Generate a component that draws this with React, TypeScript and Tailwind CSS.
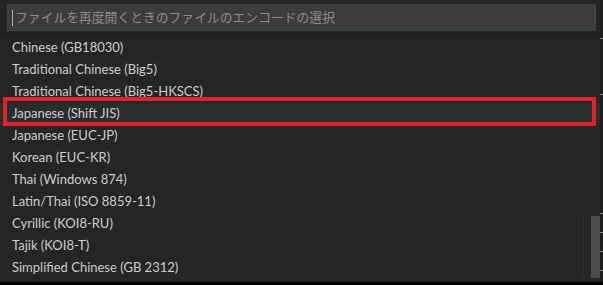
import React from "react";

const items = [
  "Chinese (GB18030)",
  "Traditional Chinese (Big5)",
  "Traditional Chinese (Big5-HKSCS)",
  "Japanese (Shift JIS)",
  "Japanese (EUC-JP)",
  "Korean (EUC-KR)",
  "Thai (Windows 874)",
  "Latin/Thai (ISO 8859-11)",
  "Cyrillic (KOI8-RU)",
  "Tajik (KOI8-T)",
  "Simplified Chinese (GB 2312)",
];

export default function App() {
  return (
    <div
      className="w-[603px] h-[285px] bg-[#1e1e1e] flex flex-col overflow-hidden"
      style={{ fontFamily: 'Lato, "Noto Sans CJK JP", sans-serif' }}
    >
      <div className="flex h-[282px]">
        <div className="w-[600px] flex flex-col bg-[#252526]">
          <div className="pt-[4px] pl-[7px] pr-[4px] pb-[1px]">
            <div className="h-[27px] border border-[#2d4853] bg-[#3c3c3c] flex items-center pl-[4px]">
              <div className="w-px h-[16px] bg-[#aeafad] mr-[2px]" />
              <span
                className="text-[12.8px] text-[#8c8c8c] leading-none"
                style={{ fontFamily: '"Noto Sans CJK JP", sans-serif' }}
              >
                ファイルを再度開くときのファイルのエンコードの選択
              </span>
            </div>
          </div>
          <div className="h-[4px] bg-[#1f1f1f]" />
          <div className="relative flex-1 flex flex-col pt-[1px]">
            {items.map((t, i) => (
              <div
                key={t}
                className={
                  "relative h-[22px] flex items-center pl-[12px] text-[13px] text-[#cccccc] " +
                  (i === 3 ? "bg-[#2a2d2e]" : "")
                }
              >
                {t}
                {i === 3 && (
                  <div className="absolute left-[3px] right-[4px] top-[-6px] bottom-[-1px] border-[4px] border-[#e0232a]" />
                )}
              </div>
            ))}
            <div className="absolute right-0 bottom-[4px] h-[62px] flex gap-[2px]">
              <div className="w-px bg-[#2e2e2e]" />
              <div className="w-px bg-[#2e2e2e] mr-[2px]" />
              <div className="w-[9px] bg-[#4b4b4b]" />
            </div>
          </div>
        </div>
        <div className="flex-1 flex flex-col pt-[38px] gap-[55px]">
          <div className="h-px bg-[#888]" />
          <div className="h-px bg-[#888]" />
          <div className="flex flex-col gap-[18px] mt-[63px]">
            <div className="h-px bg-[#888]" />
            <div className="h-px bg-[#888]" />
            <div className="h-px bg-[#888]" />
            <div className="h-px bg-[#888]" />
          </div>
        </div>
      </div>
      <div className="h-[3px] bg-black" />
    </div>
  );
}
